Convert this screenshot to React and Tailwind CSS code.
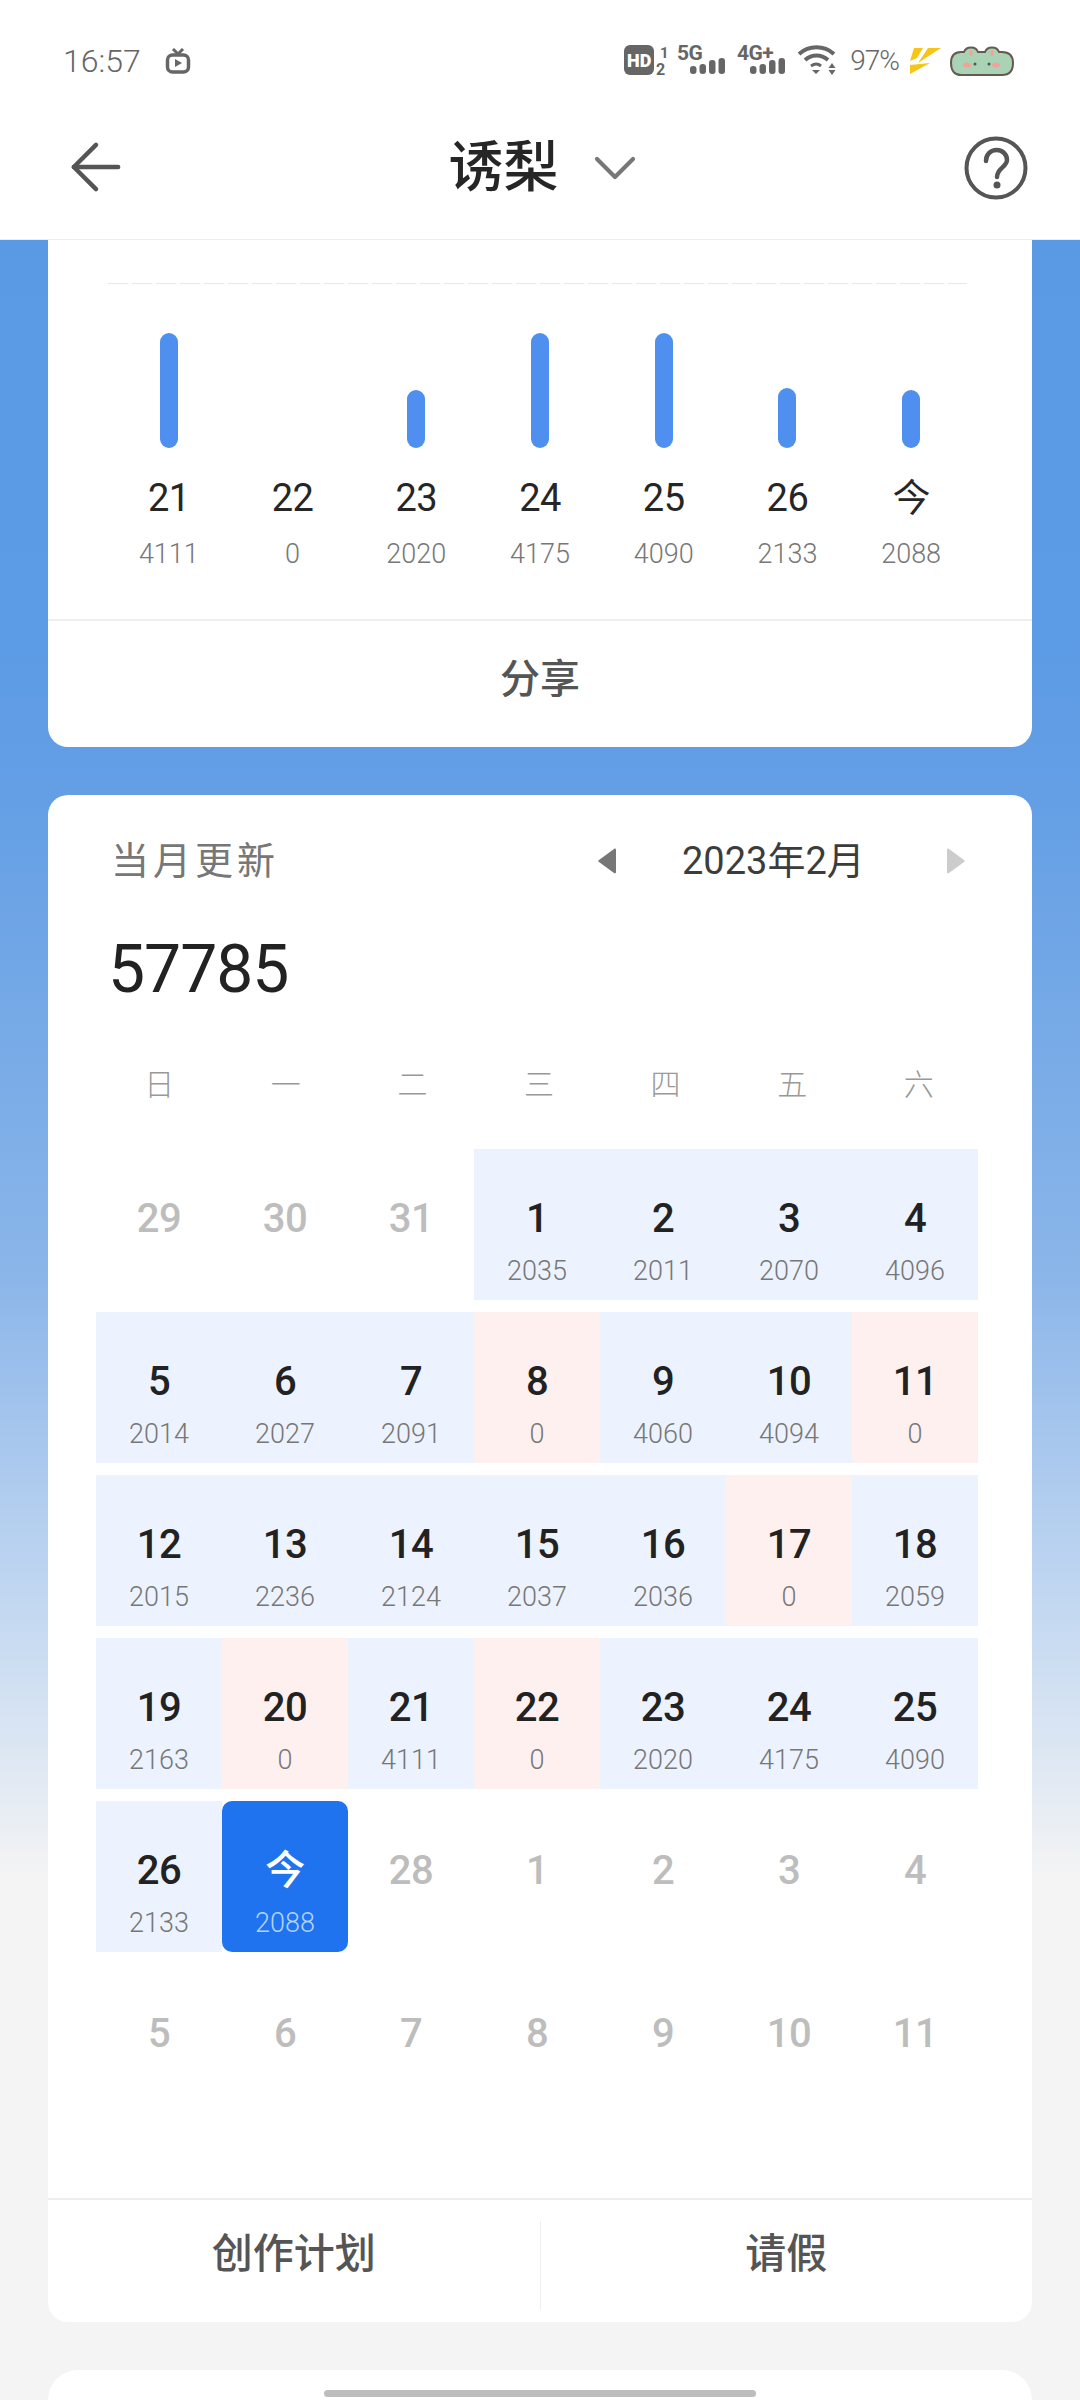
import { ArrowLeft, ChevronDown } from "lucide-react";

const bars = [
    { day: "21", count: "4111", h: "h-[115px]" },
    { day: "22", count: "0", h: "h-0" },
    { day: "23", count: "2020", h: "h-[58px]" },
    { day: "24", count: "4175", h: "h-[115px]" },
    { day: "25", count: "4090", h: "h-[115px]" },
    { day: "26", count: "2133", h: "h-[60px]" },
    { day: "今", count: "2088", h: "h-[58px]" },
];

const weekdays = ["日", "一", "二", "三", "四", "五", "六"];

// kind: m = 其他月份, b = 有更新, r = 没更新, t = 今天
const cells = [
    ["29", "", "m"], ["30", "", "m"], ["31", "", "m"], ["1", "2035", "b"], ["2", "2011", "b"], ["3", "2070", "b"], ["4", "4096", "b"],
    ["5", "2014", "b"], ["6", "2027", "b"], ["7", "2091", "b"], ["8", "0", "r"], ["9", "4060", "b"], ["10", "4094", "b"], ["11", "0", "r"],
    ["12", "2015", "b"], ["13", "2236", "b"], ["14", "2124", "b"], ["15", "2037", "b"], ["16", "2036", "b"], ["17", "0", "r"], ["18", "2059", "b"],
    ["19", "2163", "b"], ["20", "0", "r"], ["21", "4111", "b"], ["22", "0", "r"], ["23", "2020", "b"], ["24", "4175", "b"], ["25", "4090", "b"],
    ["26", "2133", "b"], ["今", "2088", "t"], ["28", "", "m"], ["1", "", "m"], ["2", "", "m"], ["3", "", "m"], ["4", "", "m"],
    ["5", "", "m"], ["6", "", "m"], ["7", "", "m"], ["8", "", "m"], ["9", "", "m"], ["10", "", "m"], ["11", "", "m"],
];

const cellBg = { m: "", b: "bg-[#ecf3fe]", r: "bg-[#fef0ef]", t: "bg-[#1f73ee] rounded-[10px]" };
const numColor = { m: "text-[#bdbdbd]", b: "text-[#222222]", r: "text-[#222222]", t: "text-white" };
const subColor = { m: "", b: "text-[#777777]", r: "text-[#777777]", t: "text-[#b5d2fb]" };

function Signal({ label, x }) {
    const bx = x + 13;
    return (
        <g fill="#666666">
            <text x={x} y="16" fontSize="21" fontWeight="700" letterSpacing="-0.5" fontFamily="Roboto, sans-serif">{label}</text>
            <rect x={bx} y="22" width="6.500" height="8" rx="3" />
            <rect x={bx + 9.500} y="20" width="6.500" height="10" rx="3" />
            <rect x={bx + 19} y="16" width="6.500" height="14" rx="3" />
            <rect x={bx + 28.500} y="14" width="6.500" height="16" rx="3" />
        </g>
    );
}

function StatusBar() {
    return (
        <div className="h-[110px] pl-[63px] pr-[65px] flex items-start pt-[41px] justify-between">
            <div className="flex items-center h-[40px]">
                <span className="text-[32px] leading-[40px] font-light text-[#666666]">16:57</span>
                <svg className="ml-[24px]" width="26" height="26" viewBox="0 0 26 26" fill="none">
                    <path d="M8 1l5 5 5-5" stroke="#666666" strokeWidth="3" />
                    <rect x="2.500" y="7" width="21" height="17" rx="5" stroke="#666666" strokeWidth="3.500" />
                    <path d="M10 11l7 4-7 4z" fill="#666666" />
                </svg>
            </div>
            <div className="flex items-center h-[40px]">
                <svg width="215" height="44" viewBox="0 -5 215 44" fill="none">
                    <rect x="0" y="1" width="30" height="30" rx="6" fill="#666666" />
                    <text x="3" y="22.500" fontSize="18" fontWeight="900" fill="#ffffff" fontFamily="Roboto, sans-serif">HD</text>
                    <text x="36" y="14" fontSize="15" fontWeight="700" fill="#666666" fontFamily="Roboto, sans-serif">1</text>
                    <text x="32" y="31" fontSize="16" fontWeight="700" fill="#666666" fontFamily="Roboto, sans-serif">2</text>
                    <Signal label="5G" x={53} />
                    <Signal label="4G+" x={113} />
                    <path d="M175 10c10-9 25-9 35 0" stroke="#666666" strokeWidth="4" />
                    <path d="M181 16c7-6 16-6 23 0" stroke="#666666" strokeWidth="4" />
                    <path d="M187 22c3.500-2.500 7-2.500 10 0" stroke="#666666" strokeWidth="3" />
                    <path d="M188 26h8l-4 4z" fill="#666666" />
                    <path d="M208 19l3.500 5h-7zM204.500 26h7l-3.500 5z" fill="#666666" />
                </svg>
                <span className="ml-[11px] text-[28px] leading-[40px] font-light tracking-[-1px] text-[#666666]">97%</span>
                <svg className="ml-[10px]" width="34" height="30" viewBox="0 0 34 30">
                    <path d="M5 2h9L8 12l-7 3z" fill="#f5c518" />
                    <path d="M19 2h13L9 17z" fill="#f5c518" />
                    <path d="M1 19l20-2L1 28z" fill="#f5c518" />
                </svg>
                <svg className="ml-[6px]" width="66" height="32" viewBox="0 0 66 32">
                    <path d="M2 18C2 10 6 7 12 7h3c2-6 12-6 14 0h7c2-6 12-6 14 0h3c7 0 11 4 11 11 0 8-4 12-11 12H12C6 30 2 26 2 18z" fill="#a9d3b4" stroke="#655a50" strokeWidth="2" />
                    <ellipse cx="18" cy="20" rx="4" ry="2.500" fill="#f2a19b" />
                    <ellipse cx="47" cy="20" rx="4" ry="2.500" fill="#f2a19b" />
                    <ellipse cx="22" cy="8" rx="1.500" ry="3" fill="#f2a19b" />
                    <ellipse cx="43" cy="8" rx="1.500" ry="3" fill="#f2a19b" />
                    <circle cx="26" cy="19" r="1.500" fill="#555555" />
                    <circle cx="40" cy="19" r="1.500" fill="#555555" />
                </svg>
            </div>
        </div>
    );
}

function Header() {
    return (
        <div className="h-[130px] pb-[16px] relative flex items-center justify-center bg-white border-b border-[#eeeeee]">
            <ArrowLeft className="absolute left-[58px] top-[19px]" size={76} strokeWidth={1.4} color="#555555" />
            <div className="flex items-center ml-[19px]">
                <span className="text-[55px] leading-[60px] font-medium text-[#262626]">诱梨</span>
                <ChevronDown className="ml-[20px] mt-[2px]" size={72} strokeWidth={1.4} color="#777777" />
            </div>
            <svg className="absolute right-[52px] top-[26px]" width="64" height="64" viewBox="0 0 64 64" fill="none">
                <circle cx="32" cy="32" r="29.500" stroke="#555555" strokeWidth="4" />
                <path d="M22 25c0-7 5-11 10.500-11S43 18 43 24c0 7-10 8-10 17" stroke="#555555" strokeWidth="4.500" strokeLinecap="round" />
                <circle cx="33" cy="49" r="3.500" fill="#555555" />
            </svg>
        </div>
    );
}

function WeekCard() {
    return (
        <div className="h-[507px] bg-white rounded-b-[20px] flex flex-col">
            <div className="mt-[43px] ml-[60px] mr-[65px] h-px bg-[repeating-linear-gradient(90deg,#e8e8e8_0px,#e8e8e8_20px,transparent_20px,transparent_24px)]" />
            <div className="mx-[59px] grid grid-cols-7 flex-1">
                {bars.map((b) => (
                    <div key={b.day} className="flex flex-col items-center">
                        <div className="h-[164px] flex items-end">
                            <div className={"w-[18px] rounded-full bg-[#4f8ff0] " + b.h} />
                        </div>
                        <div className="mt-[25px] h-[50px] text-[38px] leading-[50px] tracking-[-0.5px] text-[#262626]">{b.day}</div>
                        <div className="mt-[13px] h-[36px] text-[27px] leading-[36px] font-light text-[#777777]">{b.count}</div>
                    </div>
                ))}
            </div>
            <div className="h-[128px] pb-[8px] border-t-2 border-[#eeeeee] flex items-center justify-center text-[40px] font-medium text-[#555555]">分享</div>
        </div>
    );
}

function CalendarCard() {
    return (
        <div className="mt-[48px] h-[1527px] bg-white rounded-[20px] flex flex-col">
            <div className="mt-[36px] h-[60px] pl-[63px] pr-[67px] flex items-center justify-between">
                <span className="text-[38px] tracking-[4px] text-[#777777]">当月更新</span>
                <div className="flex items-center">
                    <svg width="18" height="26" viewBox="0 0 18 26"><path d="M16 1c1-1 2 0 2 1v22c0 1-1 2-2 1L1 14c-1-.7-1-1.300 0-2z" fill="#777777" /></svg>
                    <span className="w-[331px] pl-[66px] text-[38px] text-[#3c3c3c]">2023年2月</span>
                    <svg width="18" height="26" viewBox="0 0 18 26"><path d="M2 1C1 0 0 1 0 2v22c0 1 1 2 2 1l15-11c1-.7 1-1.300 0-2z" fill="#cccccc" /></svg>
                </div>
            </div>
            <div className="mt-[34px] h-[90px] pl-[60px] text-[66px] leading-[90px] tracking-[-1px] text-[#222222]">57785</div>
            <div className="mt-[45px] h-[50px] ml-[48px] w-[886px] grid grid-cols-7 text-center text-[30px] leading-[50px] font-light text-[#999999]">
                {weekdays.map((w) => <div key={w}>{w}</div>)}
            </div>
            <div className="mt-[39px] ml-[48px] w-[882px] grid grid-cols-7 gap-y-[12px]">
                {cells.map(([num, sub, kind], i) => (
                    <div key={i} className={"h-[151px] pt-[45px] flex flex-col items-center " + cellBg[kind]}>
                        <div className={"h-[50px] text-[40px] leading-[50px] tracking-[-0.5px] font-medium " + numColor[kind]}>{num}</div>
                        {sub && <div className={"mt-[9px] h-[36px] text-[27px] leading-[36px] font-light " + subColor[kind]}>{sub}</div>}
                    </div>
                ))}
            </div>
            <div className="mt-auto h-[124px] border-t-2 border-[#eeeeee] rounded-b-[20px] flex items-start text-[41px] font-medium text-[#555555]">
                <div className="flex-1 h-[110px] flex items-center justify-center">创作计划</div>
                <div className="w-px h-[89px] mt-[21px] bg-[#eeeeee]" />
                <div className="flex-1 h-[110px] flex items-center justify-center">请假</div>
            </div>
        </div>
    );
}

export default function App() {
    return (
        <div className="w-[1080px] h-[2400px] overflow-hidden relative bg-white flex flex-col font-['Roboto','Noto_Sans_CJK_SC',sans-serif]">
            <StatusBar />
            <Header />
            <div className="flex-1 min-h-0 overflow-hidden px-[48px] bg-[linear-gradient(180deg,#5a9ae4_0px,#5c9be5_400px,#649fe5_560px,#8ab5e9_1030px,#c5d9f1_1380px,#f4f4f4_1640px)]">
                <WeekCard />
                <CalendarCard />
                <div className="mt-[48px] h-[200px] bg-white rounded-t-[30px]" />
            </div>
            <div className="absolute left-[324px] bottom-[3px] w-[432px] h-[7px] rounded-full bg-[#bdbdbd]" />
        </div>
    );
}
